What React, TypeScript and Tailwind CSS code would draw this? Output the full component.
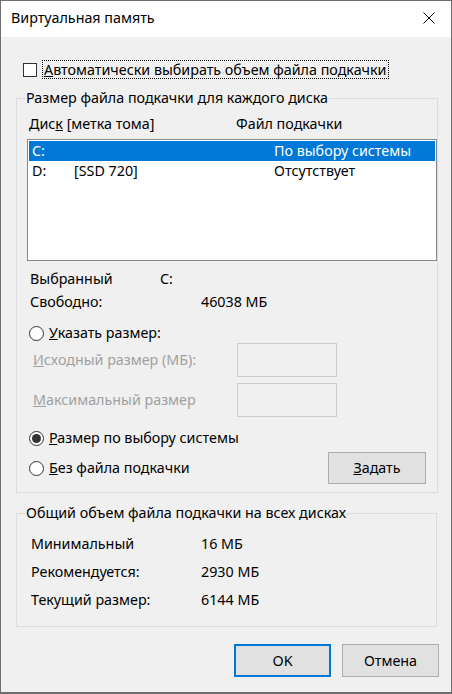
import React from "react";

const Radio = ({ checked }: { checked?: boolean }) => (
  <span className="w-[15px] h-[15px] rounded-full border border-[#333] bg-white flex items-center justify-center shrink-0">
    {checked && <span className="w-[9px] h-[9px] rounded-full bg-[#333]" />}
  </span>
);

const App = () => {
  return (
    <div className="w-[452px] h-[694px] bg-[#f0f0f0] border border-[#6e6e6e] border-b-2 flex flex-col text-[14.3px] leading-[20px] text-black font-['Segoe_UI','Noto_Sans',sans-serif] overflow-hidden">
      {/* Title bar */}
      <div className="h-[36px] bg-white flex items-center pl-[10px] pr-[16px] shrink-0">
        <span className="mt-[-2px]">Виртуальная память</span>
        <svg className="ml-auto mt-[-2px]" width="12" height="12" viewBox="0 0 12 12">
          <path d="M0.5 0.5 L11.5 11.5 M11.5 0.5 L0.5 11.5" stroke="#000" strokeWidth="1" />
        </svg>
      </div>

      <div className="pl-[15px] pr-[13px]">
        {/* Auto checkbox */}
        <div className="mt-[23px] h-[19px] flex items-center pl-[7px]">
          <span className="w-[14px] h-[14px] border border-[#333] bg-white shrink-0" />
          <span className="ml-[5px] border border-dotted border-black px-[1px] leading-[17px]">
            <u>А</u>втоматически выбирать объем файла подкачки
          </span>
        </div>

        {/* Per-disk group */}
        <fieldset className="mt-[9px] border border-[#dcdcdc] pl-[8px] pr-0 pt-[6px] pb-[8px] w-[421px]">
          <legend className="px-[1px] leading-[20px]">Размер файла подкачки для каждого диска</legend>
          <div className="h-[20px] flex items-center">
            <span className="ml-[4px] w-[207px]">
              Дис<u>к</u> [метка тома]
            </span>
            <span>Файл подкачки</span>
          </div>

          <div className="mt-[5px] ml-[2px] w-[410px] h-[122px] border border-[#828790] bg-white p-[1px]">
            <div className="h-[20px] bg-[#0078d7] text-white flex items-center">
              <span className="ml-[3px] w-[242px]">C:</span>
              <span>По выбору системы</span>
            </div>
            <div className="h-[20px] flex items-center">
              <span className="ml-[3px] w-[42px]">D:</span>
              <span className="w-[200px]">[SSD 720]</span>
              <span>Отсутствует</span>
            </div>
          </div>

          <div className="mt-[8px] h-[20px] flex items-center">
            <span className="ml-[5px] w-[130px]">Выбранный</span>
            <span>C:</span>
          </div>
          <div className="mt-[3px] h-[20px] flex items-center">
            <span className="ml-[5px] w-[171px]">Свободно:</span>
            <span>46038 МБ</span>
          </div>

          <div className="mt-[11px] h-[20px] flex items-center pl-[4px]">
            <Radio />
            <span className="ml-[5px]">
              <u>У</u>казать размер:
            </span>
          </div>

          <div className="h-[34px] flex items-center text-[#a0a0a0]">
            <span className="ml-[8px] w-[204px]">
              <u>И</u>сходный размер (МБ):
            </span>
            <span className="w-[100px] h-[34px] border border-[#cccccc]" />
          </div>
          <div className="mt-[6px] h-[34px] flex items-center text-[#a0a0a0]">
            <span className="ml-[8px] w-[204px]">
              <u>М</u>аксимальный размер
            </span>
            <span className="w-[100px] h-[34px] border border-[#cccccc]" />
          </div>

          <div className="mt-[11px] h-[20px] flex items-center pl-[4px]">
            <Radio checked />
            <span className="ml-[5px]">
              <u>Р</u>азмер по выбору системы
            </span>
          </div>

          <div className="mt-[4px] h-[32px] flex items-center pl-[4px]">
            <Radio />
            <span className="ml-[5px]">
              <u>Б</u>ез файла подкачки
            </span>
            <button className="ml-auto mr-[11px] w-[98px] h-[32px] bg-[#e1e1e1] border border-[#adadad]">
              <u>З</u>адать
            </button>
          </div>
        </fieldset>

        {/* Totals group */}
        <fieldset className="mt-[10px] border border-[#dcdcdc] pl-[8px] pr-0 pt-[11px] pb-[16px] w-[421px]">
          <legend className="px-[1px] leading-[20px]">Общий объем файла подкачки на всех дисках</legend>
          <div className="flex flex-col gap-[8px]">
            {[
              ["Минимальный", "16 МБ"],
              ["Рекомендуется:", "2930 МБ"],
              ["Текущий размер:", "6144 МБ"],
            ].map(([label, value]) => (
              <div key={label} className="h-[20px] flex items-center">
                <span className="ml-[6px] w-[170px]">{label}</span>
                <span>{value}</span>
              </div>
            ))}
          </div>
        </fieldset>

        {/* Dialog buttons */}
        <div className="mt-[17px] flex justify-end gap-[11px] mr-[-1px]">
          <button className="w-[97px] h-[33px] bg-[#e1e1e1] border-2 border-[#0078d7]">OK</button>
          <button className="w-[97px] h-[33px] bg-[#e1e1e1] border border-[#adadad]">Отмена</button>
        </div>
      </div>
    </div>
  );
};

export default App;
